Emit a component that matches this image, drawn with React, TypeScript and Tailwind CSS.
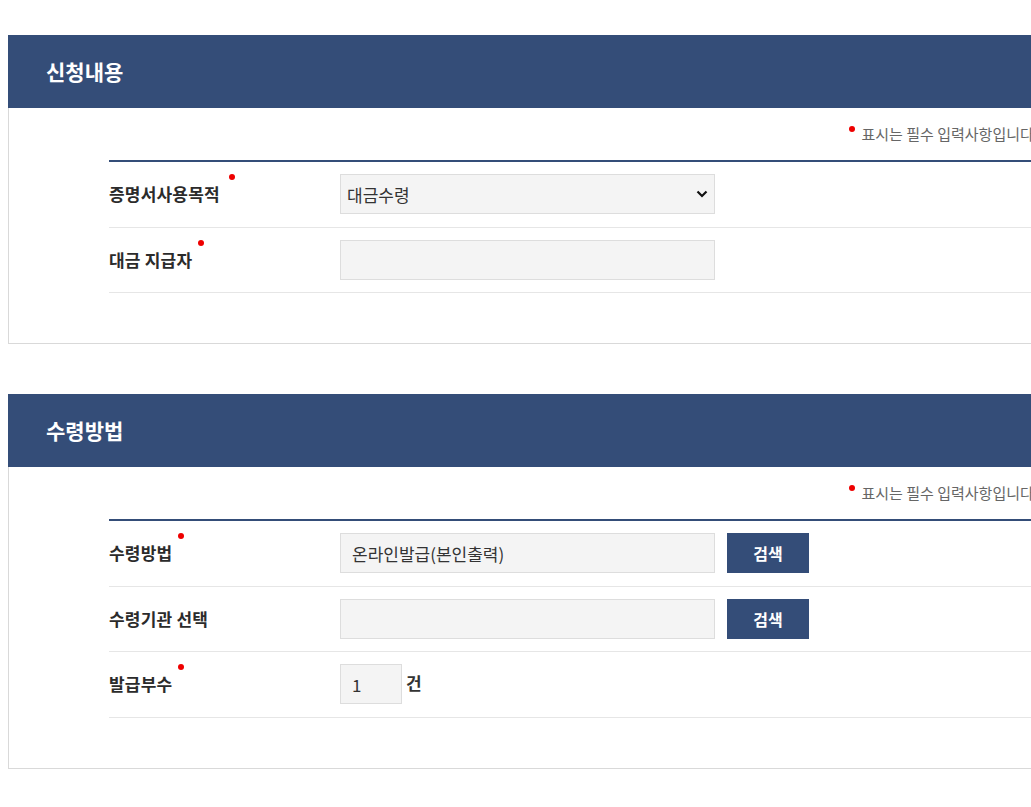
import React from "react";

const font = { fontFamily: '"Noto Sans CJK KR", "Noto Sans", sans-serif' };

function Dot({ className = "" }: { className?: string }) {
  return <span className={`absolute top-[-8px] h-[6px] w-[6px] rounded-full bg-[#ee0000] ${className}`} />;
}

function Label({ text, required, wide }: { text: string; required?: boolean; wide?: boolean }) {
  return (
    <div className="w-[231px] shrink-0">
      <span className="relative inline-block text-[17px] leading-[24px] font-bold tracking-[0.2px] text-[#2b2b2b]">
        {text}
        {required ? <Dot className={wide ? "right-[-15px]" : "right-[-12px]"} /> : null}
      </span>
    </div>
  );
}

function Row({ children }: { children: React.ReactNode }) {
  return <div className="flex h-[65.5px] items-center border-b border-[#e6e6e6]">{children}</div>;
}

const inputClass = "h-[40px] w-[375px] border border-[#dddddd] bg-[#f4f4f4] px-[11px] text-[17px] text-[#333] outline-none";

function SearchButton() {
  return (
    <button className="ml-[12px] h-[40px] w-[82px] bg-[#344d78] text-[16px] font-bold text-white" type="button">
      검색
    </button>
  );
}

function Section({ title, children, className = "" }: { title: string; children: React.ReactNode; className?: string }) {
  return (
    <section className={`w-[1131px] ${className}`}>
      <div className="flex h-[73px] items-center bg-[#344d78] pl-[38px]">
        <h2 className="text-[21px] font-bold text-white">{title}</h2>
      </div>
      <div className="border-b border-l border-r border-[#d9d9d9] px-[100px] pt-[16px] pb-[50px]">
        <p className="mb-[16px] h-[20px] text-right text-[15px] leading-[20px] text-[#666]">
          <span className="relative top-[-8px] mr-[7px] inline-block h-[6px] w-[6px] rounded-full bg-[#ee0000]" />
          표시는 필수 입력사항입니다.
        </p>
        <div className="border-t-2 border-[#344d78]">{children}</div>
      </div>
    </section>
  );
}

export default function App() {
  return (
    <div className="w-full overflow-hidden bg-white pt-[35px] pb-[40px] pl-[8px]" style={font}>
      <Section title="신청내용">
        <Row>
          <Label text="증명서사용목적" required wide />
          <div className="relative">
            <select className="h-[40px] w-[375px] appearance-none border border-[#dddddd] bg-[#f4f4f4] pl-[6px] pr-[30px] text-[17px] text-[#333] outline-none" defaultValue="대금수령">
              <option value="대금수령">대금수령</option>
            </select>
            <svg className="pointer-events-none absolute right-[7px] top-[16px]" width="12" height="8" viewBox="0 0 12 8" fill="none">
              <path d="M1.5 1.5 6 6l4.5-4.5" stroke="#111" strokeWidth="2.2" />
            </svg>
          </div>
        </Row>
        <Row>
          <Label text="대금 지급자" required />
          <input className={inputClass} type="text" />
        </Row>
      </Section>

      <Section title="수령방법" className="mt-[50px]">
        <Row>
          <Label text="수령방법" required />
          <input className={inputClass} defaultValue="온라인발급(본인출력)" readOnly type="text" />
          <SearchButton />
        </Row>
        <Row>
          <Label text="수령기관 선택" />
          <input className={inputClass} readOnly type="text" />
          <SearchButton />
        </Row>
        <Row>
          <Label text="발급부수" required />
          <input className="h-[40px] w-[62px] border border-[#dddddd] bg-[#f4f4f4] px-[11px] text-[17px] text-[#333] outline-none" defaultValue="1" type="text" />
          <span className="ml-[4px] self-center pb-[4px] text-[17px] font-bold text-[#333]">건</span>
        </Row>
      </Section>
    </div>
  );
}
